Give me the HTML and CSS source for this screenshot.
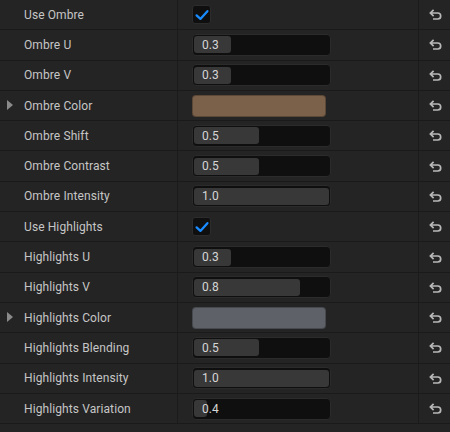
FILE: index.html
```html
<!DOCTYPE html>
<html>
<head>
<meta charset="utf-8">
<link rel="stylesheet" href="styles.css">
</head>
<body>
<div class="panel">
  <div class="row"><div class="name"><span class="label">Use Ombre</span></div><div class="value"><div class="check"><svg viewBox="0 0 18 18" width="18" height="18"><path d="M3.6 9.4 L7.4 12.9 L14.4 5.2" fill="none" stroke="#1a8cff" stroke-width="2.3" stroke-linecap="round" stroke-linejoin="round"/></svg></div></div><div class="reset"><svg class="undo" viewBox="0 0 13 11" width="13" height="11"><path d="M4.6 0.9 L1.4 4 L4.6 7.1 M1.6 4 H8.7 A3 3 0 0 1 8.7 10 H4" fill="none" stroke="#b8b8b8" stroke-width="1.7"/></svg></div></div>
  <div class="row"><div class="name"><span class="label">Ombre U</span></div><div class="value"><div class="slider"><div class="fill" style="width:37px"></div><span class="num">0.3</span></div></div><div class="reset"><svg class="undo" viewBox="0 0 13 11" width="13" height="11"><path d="M4.6 0.9 L1.4 4 L4.6 7.1 M1.6 4 H8.7 A3 3 0 0 1 8.7 10 H4" fill="none" stroke="#b8b8b8" stroke-width="1.7"/></svg></div></div>
  <div class="row"><div class="name"><span class="label">Ombre V</span></div><div class="value"><div class="slider"><div class="fill" style="width:37px"></div><span class="num">0.3</span></div></div><div class="reset"><svg class="undo" viewBox="0 0 13 11" width="13" height="11"><path d="M4.6 0.9 L1.4 4 L4.6 7.1 M1.6 4 H8.7 A3 3 0 0 1 8.7 10 H4" fill="none" stroke="#b8b8b8" stroke-width="1.7"/></svg></div></div>
  <div class="row"><div class="name"><span class="tri"></span><span class="label">Ombre Color</span></div><div class="value"><div class="swatch brown"></div></div><div class="reset"><svg class="undo" viewBox="0 0 13 11" width="13" height="11"><path d="M4.6 0.9 L1.4 4 L4.6 7.1 M1.6 4 H8.7 A3 3 0 0 1 8.7 10 H4" fill="none" stroke="#b8b8b8" stroke-width="1.7"/></svg></div></div>
  <div class="row"><div class="name"><span class="label">Ombre Shift</span></div><div class="value"><div class="slider"><div class="fill" style="width:65px"></div><span class="num">0.5</span></div></div><div class="reset"><svg class="undo" viewBox="0 0 13 11" width="13" height="11"><path d="M4.6 0.9 L1.4 4 L4.6 7.1 M1.6 4 H8.7 A3 3 0 0 1 8.7 10 H4" fill="none" stroke="#b8b8b8" stroke-width="1.7"/></svg></div></div>
  <div class="row"><div class="name"><span class="label">Ombre Contrast</span></div><div class="value"><div class="slider"><div class="fill" style="width:65px"></div><span class="num">0.5</span></div></div><div class="reset"><svg class="undo" viewBox="0 0 13 11" width="13" height="11"><path d="M4.6 0.9 L1.4 4 L4.6 7.1 M1.6 4 H8.7 A3 3 0 0 1 8.7 10 H4" fill="none" stroke="#b8b8b8" stroke-width="1.7"/></svg></div></div>
  <div class="row"><div class="name"><span class="label">Ombre Intensity</span></div><div class="value"><div class="slider"><div class="fill" style="width:135px"></div><span class="num">1.0</span></div></div><div class="reset"><svg class="undo" viewBox="0 0 13 11" width="13" height="11"><path d="M4.6 0.9 L1.4 4 L4.6 7.1 M1.6 4 H8.7 A3 3 0 0 1 8.7 10 H4" fill="none" stroke="#b8b8b8" stroke-width="1.7"/></svg></div></div>
  <div class="row"><div class="name"><span class="label">Use Highlights</span></div><div class="value"><div class="check"><svg viewBox="0 0 18 18" width="18" height="18"><path d="M3.6 9.4 L7.4 12.9 L14.4 5.2" fill="none" stroke="#1a8cff" stroke-width="2.3" stroke-linecap="round" stroke-linejoin="round"/></svg></div></div><div class="reset"><svg class="undo" viewBox="0 0 13 11" width="13" height="11"><path d="M4.6 0.9 L1.4 4 L4.6 7.1 M1.6 4 H8.7 A3 3 0 0 1 8.7 10 H4" fill="none" stroke="#b8b8b8" stroke-width="1.7"/></svg></div></div>
  <div class="row"><div class="name"><span class="label">Highlights U</span></div><div class="value"><div class="slider"><div class="fill" style="width:37px"></div><span class="num">0.3</span></div></div><div class="reset"><svg class="undo" viewBox="0 0 13 11" width="13" height="11"><path d="M4.6 0.9 L1.4 4 L4.6 7.1 M1.6 4 H8.7 A3 3 0 0 1 8.7 10 H4" fill="none" stroke="#b8b8b8" stroke-width="1.7"/></svg></div></div>
  <div class="row"><div class="name"><span class="label">Highlights V</span></div><div class="value"><div class="slider"><div class="fill" style="width:106px"></div><span class="num">0.8</span></div></div><div class="reset"><svg class="undo" viewBox="0 0 13 11" width="13" height="11"><path d="M4.6 0.9 L1.4 4 L4.6 7.1 M1.6 4 H8.7 A3 3 0 0 1 8.7 10 H4" fill="none" stroke="#b8b8b8" stroke-width="1.7"/></svg></div></div>
  <div class="row"><div class="name"><span class="tri"></span><span class="label">Highlights Color</span></div><div class="value"><div class="swatch grey"></div></div><div class="reset"><svg class="undo" viewBox="0 0 13 11" width="13" height="11"><path d="M4.6 0.9 L1.4 4 L4.6 7.1 M1.6 4 H8.7 A3 3 0 0 1 8.7 10 H4" fill="none" stroke="#b8b8b8" stroke-width="1.7"/></svg></div></div>
  <div class="row"><div class="name"><span class="label">Highlights Blending</span></div><div class="value"><div class="slider"><div class="fill" style="width:65px"></div><span class="num">0.5</span></div></div><div class="reset"><svg class="undo" viewBox="0 0 13 11" width="13" height="11"><path d="M4.6 0.9 L1.4 4 L4.6 7.1 M1.6 4 H8.7 A3 3 0 0 1 8.7 10 H4" fill="none" stroke="#b8b8b8" stroke-width="1.7"/></svg></div></div>
  <div class="row"><div class="name"><span class="label">Highlights Intensity</span></div><div class="value"><div class="slider"><div class="fill" style="width:135px"></div><span class="num">1.0</span></div></div><div class="reset"><svg class="undo" viewBox="0 0 13 11" width="13" height="11"><path d="M4.6 0.9 L1.4 4 L4.6 7.1 M1.6 4 H8.7 A3 3 0 0 1 8.7 10 H4" fill="none" stroke="#b8b8b8" stroke-width="1.7"/></svg></div></div>
  <div class="row"><div class="name"><span class="label">Highlights Variation</span></div><div class="value"><div class="slider"><div class="fill" style="width:13px"></div><span class="num">0.4</span></div></div><div class="reset"><svg class="undo" viewBox="0 0 13 11" width="13" height="11"><path d="M4.6 0.9 L1.4 4 L4.6 7.1 M1.6 4 H8.7 A3 3 0 0 1 8.7 10 H4" fill="none" stroke="#b8b8b8" stroke-width="1.7"/></svg></div></div>
</div>
</body>
</html>
```
FILE: styles.css
```css
html, body {
  margin: 0;
  padding: 0;
  background: #242424;
}
body {
  font-family: Roboto, "Liberation Sans", sans-serif;
  font-size: 12px;
  width: 450px;
  height: 432px;
  overflow: hidden;
}
.panel {
  display: flex;
  flex-direction: column;
}
.row {
  display: flex;
  height: 29.3px;
  border-bottom: 1px solid #1a1a1a;
  box-sizing: content-box;
}
.name {
  width: 177px;
  flex: none;
  display: flex;
  align-items: center;
  border-right: 1px solid #1b1b1b;
  position: relative;
}
.label {
  margin-left: 24px;
  color: #c6c6c6;
  letter-spacing: 0.1px;
}
.tri {
  position: absolute;
  left: 7px;
  top: 50%;
  margin-top: -5.5px;
  width: 0;
  height: 0;
  border-left: 6px solid #8a8a8a;
  border-top: 5.5px solid transparent;
  border-bottom: 5.5px solid transparent;
}
.value {
  flex: 1;
  display: flex;
  align-items: center;
  padding-left: 14px;
  border-right: 1px solid #1b1b1b;
}
.reset {
  width: 31px;
  flex: none;
  display: flex;
  align-items: center;
  justify-content: center;
}
.undo {
  display: block;
  margin-left: 2px;
}
.check {
  width: 19px;
  height: 19px;
  box-sizing: border-box;
  background: #0f0f0f;
  border: 1px solid #2c2c2c;
  border-radius: 3px;
  display: flex;
  align-items: center;
  justify-content: center;
}
.check svg {
  display: block;
  margin: -1px;
}
.slider {
  position: relative;
  width: 139px;
  height: 22px;
  box-sizing: border-box;
  background: #0f0f0f;
  border: 1px solid #2b2b2b;
  border-radius: 4px;
  padding: 1px;
  display: flex;
  align-items: center;
}
.fill {
  height: 17px;
  background: #383838;
  border-radius: 3px;
}
.num {
  position: absolute;
  left: 9px;
  top: 0;
  line-height: 20px;
  color: #d6d6d6;
}
.swatch {
  width: 134px;
  height: 22px;
  border-radius: 4px;
  box-sizing: border-box;
  border: 1px solid rgba(0,0,0,0.25);
}
.brown {
  background: #7b604a;
}
.grey {
  background: #5e6268;
}
```
